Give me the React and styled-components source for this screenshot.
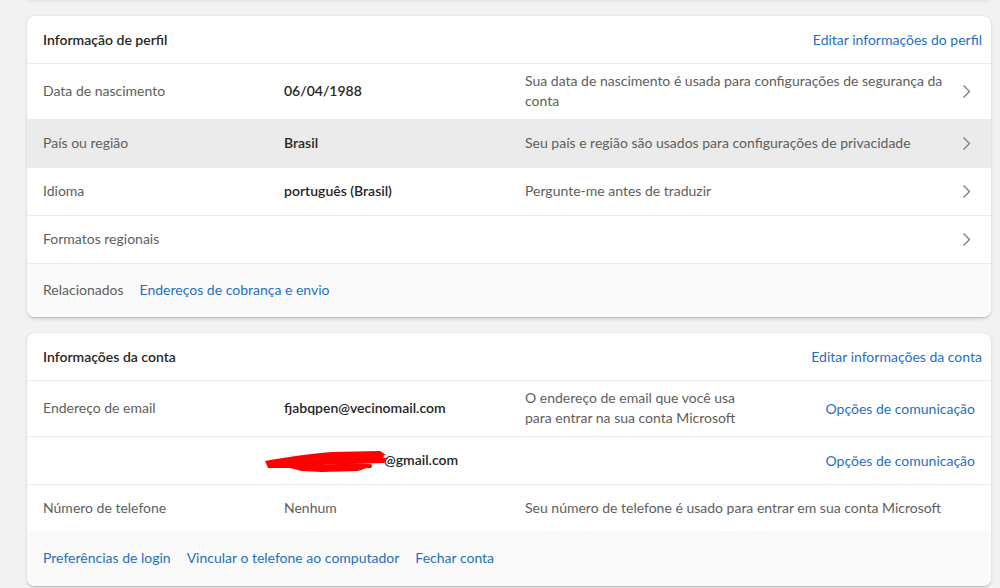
import React from 'react';
import styled, { createGlobalStyle } from 'styled-components';

const GlobalStyle = createGlobalStyle`
  body {
    margin: 0;
    background: #f2f2f2;
    font-family: Lato, "Noto Sans", "Liberation Sans", sans-serif;
    font-size: 14px;
    color: #262626;
  }
`;

const Page = styled.div`
  display: flex;
  flex-direction: column;
  gap: 16px;
  padding: 0 9px 3px 27px;
`;

const PrevCard = styled.div`
  height: 1px;
  margin-top: -1px;
  background: #fff;
  border-radius: 0 0 8px 8px;
  box-shadow: 0 1.6px 3.6px rgba(0, 0, 0, 0.13), 0 0.3px 0.9px rgba(0, 0, 0, 0.11);
`;

const Card = styled.section`
  background: #fff;
  border-radius: 8px;
  overflow: hidden;
  box-shadow: 0 1.6px 3.6px rgba(0, 0, 0, 0.13), 0 0.3px 0.9px rgba(0, 0, 0, 0.11);
`;

const Header = styled.div`
  display: flex;
  align-items: center;
  justify-content: space-between;
  height: 47px;
  padding: 0 9px 0 16px;
  border-bottom: 1px solid #ebebeb;
`;

const Title = styled.h2`
  margin: 0;
  font-size: 14px;
  font-weight: 600;
  color: #262626;
`;

const Link = styled.a`
  color: #1f6fc5;
  text-decoration: none;
  cursor: pointer;
  white-space: nowrap;
`;

const Row = styled.div`
  display: grid;
  grid-template-columns: 241px 241px 1fr auto;
  align-items: center;
  min-height: ${(p) => p.$height || 47}px;
  padding: 0 ${(p) => p.$padRight || 20}px 1px 16px;
  background: ${(p) => (p.$active ? '#ebebeb' : '#fff')};
  border-bottom: ${(p) => (p.$last ? 'none' : '1px solid #ebebeb')};
  box-sizing: border-box;
`;

const Label = styled.div`
  color: #605e5c;
  line-height: 20px;
`;

const Value = styled.div`
  font-weight: ${(p) => (p.$plain ? 400 : 600)};
  color: ${(p) => (p.$plain ? '#605e5c' : '#262626')};
  line-height: 20px;
`;

const Desc = styled.div`
  color: #605e5c;
  line-height: 20px;
  max-width: ${(p) => (p.$narrow ? '225px' : 'none')};
`;

const Action = styled.div`
  display: flex;
  align-items: center;
  justify-content: flex-end;
  padding-left: 8px;
`;

const Footer = styled.div`
  display: flex;
  align-items: center;
  gap: 16px;
  height: ${(p) => p.$height}px;
  padding: 0 16px 2px;
  background: #fafafa;
  box-sizing: border-box;
`;

const Muted = styled.span`
  color: #605e5c;
`;

const Redacted = styled.span`
  position: relative;
  display: inline-block;
  width: 100px;
  height: 20px;
  vertical-align: top;
`;

const Scribble = styled.svg`
  position: absolute;
  left: -22px;
  top: -8px;
`;

function Chevron() {
  return (
    <svg width="9" height="15" viewBox="0 0 9 15" fill="none">
      <path d="M1.5 1.5 7.5 7.5 1.5 13.5" stroke="#767676" strokeWidth="1.2" />
    </svg>
  );
}

const profileRows = [
  {
    label: 'Data de nascimento',
    value: '06/04/1988',
    desc: 'Sua data de nascimento é usada para configurações de segurança da conta',
    height: 56,
  },
  {
    label: 'País ou região',
    value: 'Brasil',
    desc: 'Seu país e região são usados para configurações de privacidade',
    active: true,
  },
  {
    label: 'Idioma',
    value: 'português (Brasil)',
    desc: 'Pergunte-me antes de traduzir',
  },
  { label: 'Formatos regionais', value: '', desc: '' },
];

function App() {
  return (
    <>
      <GlobalStyle />
      <Page>
        <PrevCard />

        <Card>
          <Header>
            <Title>Informação de perfil</Title>
            <Link>Editar informações do perfil</Link>
          </Header>
          {profileRows.map((r) => (
            <Row key={r.label} $height={r.height || 48} $active={r.active}>
              <Label>{r.label}</Label>
              <Value>{r.value}</Value>
              <Desc>{r.desc}</Desc>
              <Action>
                <Chevron />
              </Action>
            </Row>
          ))}
          <Footer $height={53}>
            <Muted>Relacionados</Muted>
            <Link>Endereços de cobrança e envio</Link>
          </Footer>
        </Card>

        <Card>
          <Header>
            <Title>Informações da conta</Title>
            <Link>Editar informações da conta</Link>
          </Header>
          <Row $height={56} $padRight={16}>
            <Label>Endereço de email</Label>
            <Value>fjabqpen@vecinomail.com</Value>
            <Desc $narrow>O endereço de email que você usa para entrar na sua conta Microsoft</Desc>
            <Action>
              <Link>Opções de comunicação</Link>
            </Action>
          </Row>
          <Row $height={48} $padRight={16}>
            <Label />
            <Value>
              <Redacted>
                <Scribble width="130" height="34" viewBox="0 0 130 34" fill="none">
                  <path
                    d="M3 19 C25 15 45 12 70 10 L118 9 L124 13 L90 15 L126 16 L122 21 L88 22 L60 23 L110 24 L96 29 L60 30 L40 29 L28 26 L6 26 Z"
                    fill="#ff0000"
                  />
                  <path
                    d="M8 22 C40 17 80 15 120 14 M40 27 C70 24 95 23 108 24"
                    stroke="#ff0000"
                    strokeWidth="4"
                    strokeLinecap="round"
                  />
                </Scribble>
              </Redacted>
              @gmail.com
            </Value>
            <Desc />
            <Action>
              <Link>Opções de comunicação</Link>
            </Action>
          </Row>
          <Row $height={46} $padRight={16} $last>
            <Label>Número de telefone</Label>
            <Value $plain>Nenhum</Value>
            <Desc>Seu número de telefone é usado para entrar em sua conta Microsoft</Desc>
            <Action />
          </Row>
          <Footer $height={55}>
            <Link>Preferências de login</Link>
            <Link>Vincular o telefone ao computador</Link>
            <Link>Fechar conta</Link>
          </Footer>
        </Card>
      </Page>
    </>
  );
}

export default App;
